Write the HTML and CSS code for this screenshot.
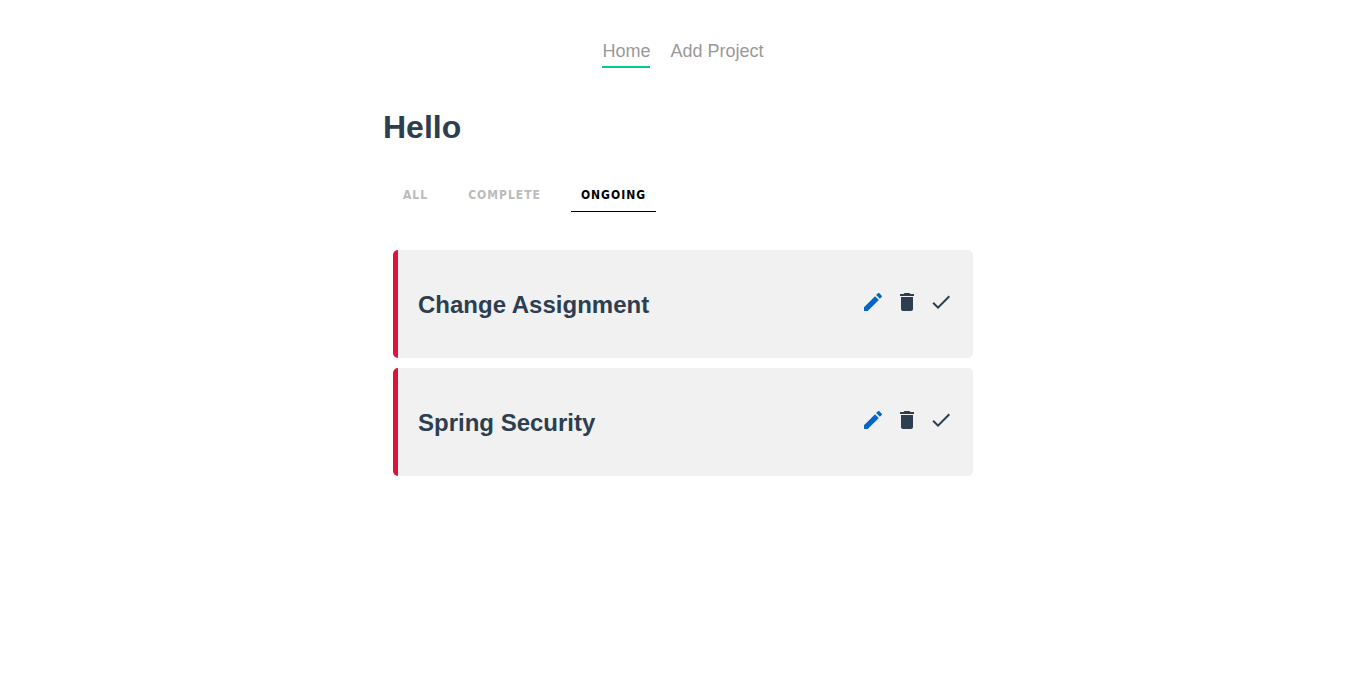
FILE: index.html
```html
<!DOCTYPE html>
<html lang="en">
<head>
<meta charset="utf-8">
<title>Projects</title>
<link rel="stylesheet" href="styles.css">
</head>
<body>
<nav class="nav">
  <a class="nav-link active" href="#">Home</a>
  <a class="nav-link" href="#add">Add Project</a>
</nav>
<main class="home">
  <h1 class="title">Hello</h1>
  <div class="filters">
    <button class="filter">all</button>
    <button class="filter">complete</button>
    <button class="filter active">ongoing</button>
  </div>
  <section class="project">
    <h2 class="project-title">Change Assignment</h2>
    <div class="icons">
      <a class="icon edit" href="#edit" aria-label="Edit"><svg viewBox="0 0 24 24"><path d="M3 17.250v3.750h3.750L17.810 9.940l-3.750-3.750L3 17.250zM20.710 7.040c.39-.39.39-1.020 0-1.410l-2.340-2.340c-.39-.39-1.020-.39-1.410 0l-1.830 1.830 3.750 3.750 1.830-1.830z"/></svg></a>
      <button class="icon" aria-label="Delete"><svg viewBox="0 0 24 24"><path d="M6 19c0 1.100.9 2 2 2h8c1.100 0 2-.9 2-2V7H6v12zM19 4h-3.500l-1-1h-5l-1 1H5v2h14V4z"/></svg></button>
      <button class="icon" aria-label="Complete"><svg viewBox="0 0 24 24"><path d="M9 16.170 4.830 12l-1.420 1.410L9 19 21 7l-1.410-1.410z"/></svg></button>
    </div>
  </section>
  <section class="project">
    <h2 class="project-title">Spring Security</h2>
    <div class="icons">
      <a class="icon edit" href="#edit" aria-label="Edit"><svg viewBox="0 0 24 24"><path d="M3 17.250v3.750h3.750L17.810 9.940l-3.750-3.750L3 17.250zM20.710 7.040c.39-.39.39-1.020 0-1.410l-2.340-2.340c-.39-.39-1.020-.39-1.410 0l-1.830 1.830 3.750 3.750 1.830-1.830z"/></svg></a>
      <button class="icon" aria-label="Delete"><svg viewBox="0 0 24 24"><path d="M6 19c0 1.100.9 2 2 2h8c1.100 0 2-.9 2-2V7H6v12zM19 4h-3.500l-1-1h-5l-1 1H5v2h14V4z"/></svg></button>
      <button class="icon" aria-label="Complete"><svg viewBox="0 0 24 24"><path d="M9 16.170 4.830 12l-1.420 1.410L9 19 21 7l-1.410-1.410z"/></svg></button>
    </div>
  </section>
</main>
</body>
</html>
```
FILE: styles.css
```css
body {
  margin: 0;
  background: #fff;
  color: #2c3e50;
  font-family: "Liberation Sans", Arial, sans-serif;
}
.nav {
  display: flex;
  justify-content: center;
  gap: 20px;
  padding: 40px 20px;
}
.nav-link {
  color: #999;
  font-size: 18px;
  line-height: 22px;
  padding-bottom: 4px;
  border-bottom: 2px solid transparent;
  text-decoration: none;
}
.nav-link.active { border-bottom-color: #00ce89; }
.home {
  max-width: 600px;
  margin: 0 auto;
}
.title {
  margin: 0 0 32px;
  font-size: 32px;
  line-height: 38px;
}
.filters {
  display: flex;
  gap: 20px;
  padding: 0 10px;
  margin-bottom: 38px;
}
.filter {
  border: 0;
  border-bottom: 1px solid transparent;
  padding: 8px 10px 7px;
  background: none;
  color: #bbb;
  font: bold 12px/18px "DejaVu Sans Condensed", "DejaVu Sans", sans-serif;
  letter-spacing: 1px;
  text-transform: uppercase;
}
.filter.active {
  color: #000;
  border-bottom-color: #000;
}
.project {
  display: flex;
  align-items: flex-start;
  justify-content: space-between;
  margin: 10px;
  padding: 40px 20px 38px;
  background: #f1f1f1;
  border-left: 5px solid crimson;
  border-radius: 5px;
}
.project-title {
  margin: 0;
  font-size: 24px;
  line-height: 30px;
}
.icons {
  display: flex;
  gap: 10px;
}
.icon {
  display: block;
  width: 24px;
  height: 24px;
  padding: 0;
  border: 0;
  background: none;
  color: #2c3e50;
}
.icon.edit { color: #0066cc; }
.icon svg {
  display: block;
  width: 24px;
  height: 24px;
  fill: currentColor;
}
```
